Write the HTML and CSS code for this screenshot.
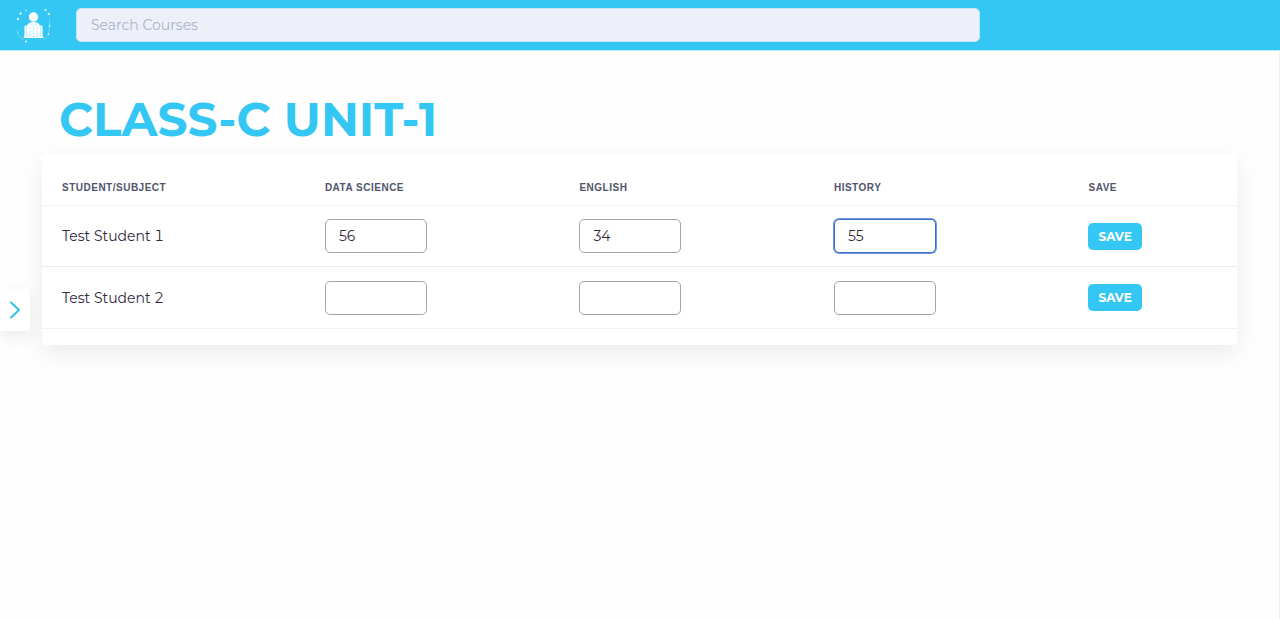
FILE: index.html
```html
<!DOCTYPE html>
<html lang="en">
<head>
<meta charset="utf-8">
<meta name="viewport" content="width=device-width, initial-scale=1">
<title>Class-C Unit-1</title>
<link rel="stylesheet" href="styles.css">
</head>
<body>
<header class="topbar">
  <a class="logo" href="#" aria-label="Home">
    <svg width="38" height="38" viewBox="0 0 38 38" fill="#fff" aria-hidden="true">
      <circle cx="19.500" cy="11" r="4.700"/>
      <path d="M12.500 22c.3-3.900 2.800-6 7-6s6.700 2.100 7 6v4h-14z"/>
      <path d="M10.500 20c3.500-.8 6.300-.4 9 1.200 2.700-1.600 5.500-2 9-1.200v8.500l1 3.500h-20l1-3.500z"/>
      <g stroke="#35c7f3" stroke-width=".4" opacity=".8" fill="none">
        <path d="M12.500 20.500v9M16 20.500v9M19.500 21v10M23 20.500v9M26.500 20.500v9M10.500 30.300c3.500-1 6.300-.5 9 .9 2.700-1.400 5.500-1.900 9-.9M16 17.500l3.500 2 3.500-2"/>
      </g>
      <g stroke="#fff" stroke-width=".5" opacity=".5" fill="none">
        <path d="M3 24c.5 5 3 8 7 10.500M35.500 13v10c-.5 5-3 9-7 11"/>
      </g>
      <circle cx="6.500" cy="7.500" r="1.100"/><circle cx="4" cy="13" r="1"/>
      <circle cx="12" cy="4.500" r=".7"/><circle cx="31.500" cy="4" r=".9"/>
      <circle cx="34.800" cy="8" r="1.100"/><circle cx="35.500" cy="20" r=".8"/>
      <circle cx="34.500" cy="28" r=".8"/><circle cx="12" cy="35.500" r=".9"/>
      <circle cx="4" cy="27" r=".5"/>
    </svg>
  </a>
  <input class="search" type="search" placeholder="Search Courses" aria-label="Search Courses">
</header>
<button class="drawer" type="button" aria-label="Open menu">
  <svg width="12" height="18" viewBox="0 0 12 18" fill="none" stroke="#35c0e8" stroke-width="2" stroke-linecap="round" stroke-linejoin="round" aria-hidden="true"><path d="M2 1.500L10 9l-8 7.500"/></svg>
</button>
<main class="content">
  <h1 class="title">CLASS-C UNIT-1</h1>
  <section class="card">
    <table class="marks">
      <thead>
        <tr><th class="student" scope="col">STUDENT/SUBJECT</th><th class="subject" scope="col">DATA SCIENCE</th><th class="subject" scope="col">ENGLISH</th><th class="subject" scope="col">HISTORY</th><th scope="col">SAVE</th></tr>
      </thead>
      <tbody>
        <tr>
          <td>Test Student 1</td>
          <td><input class="mark" type="text" value="56" aria-label="Test Student 1 Data Science"></td>
          <td><input class="mark" type="text" value="34" aria-label="Test Student 1 English"></td>
          <td><input class="mark mark-active" type="text" value="55" aria-label="Test Student 1 History"></td>
          <td><button class="save" type="button">SAVE</button></td>
        </tr>
        <tr>
          <td>Test Student 2</td>
          <td><input class="mark" type="text" aria-label="Test Student 2 Data Science"></td>
          <td><input class="mark" type="text" aria-label="Test Student 2 English"></td>
          <td><input class="mark" type="text" aria-label="Test Student 2 History"></td>
          <td><button class="save" type="button">SAVE</button></td>
        </tr>
      </tbody>
    </table>
  </section>
</main>
</body>
</html>
```
FILE: styles.css
```css
* { box-sizing: border-box; }

body {
  margin: 0;
  min-height: 100vh;
  background: #fefefe;
  color: #32283c;
  font-family: Montserrat, Inter, sans-serif;
  font-size: 14px;
}

.topbar {
  display: flex;
  align-items: center;
  height: 51px;
  padding-left: 14px;
  border-bottom: 1px solid #b9ecfb;
  background: #35c7f3;
}

.logo { display: flex; width: 62px; }

.search {
  width: 75%;
  max-width: 904px;
  height: 34px;
  padding: 0 14px;
  border: 1px solid #c5e6f5;
  border-radius: 5px;
  background: #edf0f8;
  font: inherit;
  color: #32283c;
}

.search::placeholder { color: #a9b3cb; opacity: 1; }

.drawer {
  position: fixed;
  top: 289px;
  left: 0;
  display: flex;
  align-items: center;
  justify-content: center;
  width: 30px;
  height: 42px;
  padding: 0;
  border: 0;
  border-radius: 0 4px 4px 0;
  background: #fff;
  box-shadow: 0 6px 16px rgba(0, 0, 0, .08);
}

.content {
  min-height: calc(100vh - 51px);
  padding: 39px 42px;
  border-right: 1px solid #efeff1;
}

.title {
  margin: 0;
  padding-left: 17px;
  color: #35c7f3;
  font-size: 47px;
  line-height: 60px;
  font-weight: 700;
}

.card {
  margin-top: 4px;
  padding: 16px 0;
  border-radius: 4px;
  background: #fff;
  box-shadow: 0 8px 24px rgba(0, 0, 0, .08);
}

.marks {
  width: 100%;
  border-collapse: separate;
  border-spacing: 0;
  table-layout: fixed;
  font-variant-numeric: lining-nums tabular-nums;
}

.student { width: 22%; }
.subject { width: 21.3%; }

.marks th {
  height: 36px;
  padding: 0 20px;
  border-bottom: 1px solid #f1f1f4;
  color: #50546c;
  font: 700 10px "Liberation Sans", sans-serif;
  letter-spacing: .5px;
  text-align: left;
}

.marks td {
  height: 62px;
  padding: 0 20px;
  border-bottom: 1px solid #f1f1f4;
}

.marks tbody tr:first-child td { height: 61px; border-bottom-color: #e9eaf2; }

.mark {
  display: block;
  width: 102px;
  height: 34px;
  padding: 0 13px;
  border: 1px solid #a5a5a8;
  border-radius: 5px;
  background: #fff;
  color: #32283c;
  font: inherit;
  font-variant-numeric: normal;
}

.mark-active,
.mark:focus {
  border-color: #3d6fc9;
  outline: 0;
  box-shadow: 0 0 0 1px #6f96df;
}

.save {
  display: block;
  height: 27px;
  padding: 0 10px;
  border: 0;
  border-radius: 5px;
  background: #35c7f3;
  color: #fff;
  font: inherit;
  font-size: 12px;
  font-weight: 700;
}
```
